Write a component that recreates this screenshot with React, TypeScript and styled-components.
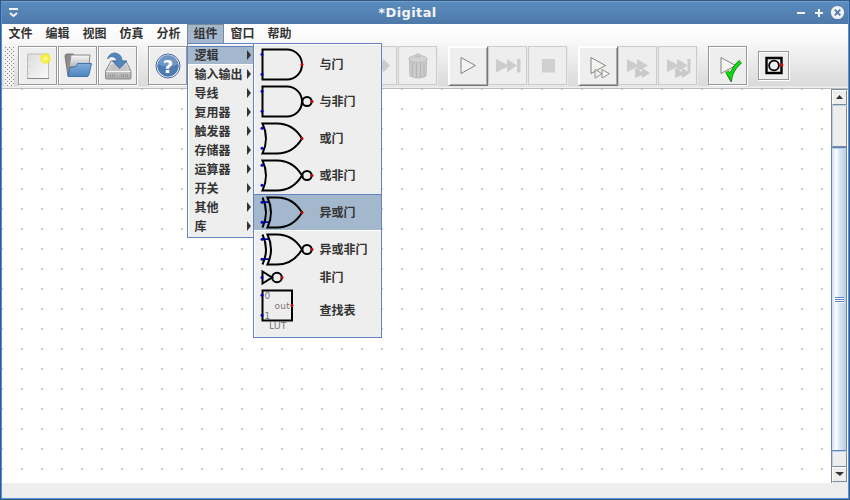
import React from "react";
import styled, { createGlobalStyle, css } from "styled-components";

const Global = createGlobalStyle`
  * { box-sizing: border-box; }
  body { margin: 0; overflow: hidden; }
`;

const Frame = styled.div`
  width: 850px;
  height: 500px;
  padding: 1px;
  background: #35597f;
`;
const Body = styled.div`
  height: 498px;
  border: 1px solid #5294e2;
  border-top-color: #6d9fd2;
  display: flex;
  flex-direction: column;
  background: #eee;
  font: bold 12px "DejaVu Sans", "Noto Sans CJK SC", sans-serif;
  color: #333;
`;
const TitleBar = styled.header`
  height: 22px;
  flex: none;
  display: grid;
  grid-template-columns: 60px 1fr 60px;
  align-items: center;
  background: linear-gradient(#5b8cbe, #4c79a9);
`;
const Title = styled.div`
  text-align: center;
  color: #f4f4f4;
  font-size: 13px;
  letter-spacing: 0.4px;
  line-height: 20px;
  padding-right: 35px;
`;
const TitleIcon = styled.svg`
  display: block;
  width: 60px;
  height: 22px;
`;
const MenuBar = styled.nav`
  height: 19px;
  flex: none;
  display: flex;
  background: linear-gradient(#fff, #f8f8f8);
`;
const MenuEntry = styled.div<{ $open?: boolean }>`
  position: relative;
  width: 37px;
  height: 19px;
  padding: 1px 0 0 6.5px;
  line-height: 19px;
  white-space: nowrap;
  ${(p) =>
    p.$open &&
    css`
      background: #a3b8cc;
      border: solid #7a8a99;
      border-width: 1px 1px 0;
      padding: 1px 0 0 5.5px;
      line-height: 17px;
    `}
`;
const Popups = styled.div`
  position: absolute;
  z-index: 2;
  left: -1px;
  top: 18px;
  display: flex;
  align-items: flex-start;
`;
const Popup = styled.div<{ $w: number; $h: number; $joined?: boolean }>`
  width: ${(p) => p.$w}px;
  height: ${(p) => p.$h}px;
  border: 1px solid #6382bf;
  border-right-width: ${(p) => (p.$joined ? 0 : 1)}px;
  background: #eee;
  box-shadow: inset 1px 1px #fff;
  padding-top: 2px;
`;
const MenuRow = styled.div<{ $active?: boolean }>`
  height: 19px;
  display: flex;
  justify-content: space-between;
  align-items: flex-start;
  padding: 1px 2px 0 6.5px;
  line-height: 17px;
  ${(p) => p.$active && css`background: #a3b8cc; box-shadow: inset 0 1px #6382bf, inset 0 -1px #fff;`}
  &::after {
    content: "";
    margin-top: 3px;
    border: solid transparent;
    border-width: 5px 0 5px 4px;
    border-left-color: #333;
  }
`;
const RowLabel = styled.span`
  padding-top: 1px;
`;
const GateRow = styled.div<{ $h: number; $active?: boolean }>`
  height: ${(p) => p.$h}px;
  display: flex;
  align-items: center;
  padding-left: 6px;
  line-height: 16px;
  ${(p) => p.$active && css`background: #a3b8cc; box-shadow: inset 0 1px #6382bf, inset 0 -1px #fff;`}
`;
const GateSvg = styled.svg`
  width: 59.5px;
  flex: none;
  display: block;
  overflow: visible;
`;
const ToolBar = styled.div`
  height: 46px;
  flex: none;
  display: flex;
  align-items: flex-start;
  padding: 3px 0 0 2px;
  background: linear-gradient(#f7f7f7, #dadada 43px, #ddd 43px, #eee 44px, #eee 45px, #bbb 45px, #bbb 46px);
`;
const Grip = styled.div`
  width: 10px;
  height: 40px;
  margin-right: 4px;
  background:
    conic-gradient(from 0deg at 1px 1px, transparent 75%, #888 0) 1px 1px / 4px 4px,
    conic-gradient(from 0deg at 1px 1px, transparent 75%, #888 0) 3px 3px / 4px 4px,
    #f2f2f2;
`;
type Kind = "normal" | "raised" | "disabled";
const ToolButton = styled.div<{ $kind?: Kind; $gap?: number; $small?: boolean }>`
  width: ${(p) => (p.$small ? 31 : 39)}px;
  height: ${(p) => (p.$small ? 29 : 39)}px;
  margin-right: ${(p) => p.$gap ?? 1}px;
  margin-top: ${(p) => (p.$small ? 5 : 0)}px;
  flex: none;
  display: grid;
  place-items: center;
  background: #eee;
  border: 1px solid #999;
  box-shadow: inset 1px 1px #fff, 1px 1px #fff;
  ${(p) => p.$kind === "disabled" && css`border-color: #ccc; box-shadow: 1px 1px #e8e8e8;`}
  ${(p) =>
    p.$kind === "raised" &&
    css`
      width: 40px;
      height: 40px;
      margin-right: ${(p.$gap ?? 1) - 1}px;
      border: 1px solid;
      border-color: #fff #777 #777 #fff;
      box-shadow: inset 1px 1px #fff, inset -1px -1px #aaa;
    `}
`;
const Icon = styled.svg`
  display: block;
  width: 32px;
  height: 32px;
`;
const Work = styled.main`
  flex: 1;
  display: flex;
`;
const Canvas = styled.div`
  flex: 1;
  background:
    linear-gradient(90deg, transparent 2px, #fff 2px) -1px -1px / 20px 20px,
    linear-gradient(transparent 2px, #fff 2px) -1px -1px / 20px 20px,
    #ccc;
`;
const Scroll = styled.aside`
  width: 17px;
  height: 394px;
  border-left: 1px solid #7a8a99;
  border-right: 1px solid #fff;
  border-top: 1px solid #7a8a99;
  display: flex;
  flex-direction: column;
  background: #eee;
`;
const ScrollBtn = styled.div`
  height: 15px;
  flex: none;
  display: grid;
  place-items: center;
  padding-bottom: 1px;
  border: 1px solid #fff;
  border-right-color: #7a8a99;
  border-bottom-color: #7a8a99;
`;
const Track = styled.div<{ $h: number }>`
  height: ${(p) => p.$h}px;
  border: solid #b8cfe5;
  border-width: 1px 0 0 1px;
  box-shadow: inset -1px 0 #7a8a99;
  border-bottom: 1px solid #7a8a99;
`;
const Thumb = styled.div`
  height: 304px;
  margin-left: -1px;
  border: 1px solid #6382bf;
  background: linear-gradient(90deg, #cddeed, #fff 30%, #dde8f3 50%, #b8cfe5);
  box-shadow: inset 0 1px #b8cfe5;
  display: flex;
  align-items: center;
  justify-content: center;
`;
const Ridges = styled.div`
  width: 9px;
  height: 6px;
  margin-top: 2px;
  background: repeating-linear-gradient(#6382bf 0 1px, #fff 1px 2px);
`;
const Status = styled.footer`
  height: 15px;
  flex: none;
  background: #eee;
`;

type GateKind = "and" | "or" | "xor" | "not" | "lut";
function Gate({ kind, inverted }: { kind: GateKind; inverted?: boolean }) {
  if (kind === "not")
    return (
      <GateSvg height={19} viewBox="0 0 59.5 19">
        <g fill="none" stroke="#000" strokeWidth="2">
          <path d="M2.5 3.5V15.5L12 9.5Z" />
          <circle cx="17" cy="9.5" r="4.8" />
        </g>
        <circle cx="2" cy="9.5" r="1.5" fill="#00c" />
        <circle cx="22" cy="9.5" r="1.5" fill="#c00" />
      </GateSvg>
    );
  if (kind === "lut")
    return (
      <GateSvg height={48} viewBox="0 0 59.5 48">
        <path d="M2.5 3.5H32V33.5H2.5Z" fill="none" stroke="#000" strokeWidth="2" />
        <g fill="#777" fontFamily="DejaVu Sans" fontWeight="400" fontSize="9">
          <text x="4.5" y="11.5">0</text>
          <text x="4.5" y="31.5">1</text>
          <text x="14.5" y="21.5" letterSpacing="0.3">out</text>
          <text x="9" y="42" fontSize="9.5">LUT</text>
        </g>
        <circle cx="2" cy="8.3" r="1.5" fill="#00c" />
        <circle cx="2" cy="28.3" r="1.5" fill="#00c" />
        <circle cx="32" cy="18.5" r="1.5" fill="#c00" />
      </GateSvg>
    );
  const out = inverted ? 52 : 42;
  return (
    <GateSvg height={37} viewBox="0 0 59.5 37">
      {kind === "xor" && <path d="M2 8.2H9M2 28.2H9" stroke="#0000c0" strokeWidth="1.7" />}
      <g fill="none" stroke="#000" strokeWidth="2">
        {kind === "and" && <path d="M2.5 3.5H27A15 15 0 0 1 27 33.5H2.5Z" />}
        {kind === "or" && <path d="M2.5 3.5H17Q33 3.5 42 18.5Q33 33.5 17 33.5H2.5Q9.5 18.5 2.5 3.5Z" />}
        {kind === "xor" && (
          <>
            <path d="M7.5 3.5H17Q33 3.5 42 18.5Q33 33.5 17 33.5H7.5Q14.5 18.5 7.5 3.5Z" />
            <path d="M2.5 3.5Q9.5 18.5 2.5 33.5" />
          </>
        )}
        {inverted && <circle cx="47" cy="18.5" r="4.6" />}
      </g>
      <circle cx="2" cy="8.3" r="1.5" fill="#00c" />
      <circle cx="2" cy="28.3" r="1.5" fill="#00c" />
      <circle cx={out} cy="18.5" r="1.5" fill="#c00" />
    </GateSvg>
  );
}

const gates: { name: string; kind: GateKind; h: number; inverted?: boolean; active?: boolean }[] = [
  { name: "与门", kind: "and", h: 37 },
  { name: "与非门", kind: "and", h: 37, inverted: true },
  { name: "或门", kind: "or", h: 37 },
  { name: "或非门", kind: "or", h: 37, inverted: true },
  { name: "异或门", kind: "xor", h: 37, active: true },
  { name: "异或非门", kind: "xor", h: 37, inverted: true },
  { name: "非门", kind: "not", h: 19 },
  { name: "查找表", kind: "lut", h: 48 },
];
const menus = ["文件", "编辑", "视图", "仿真", "分析", "组件", "窗口", "帮助"];
const groups = ["逻辑", "输入输出", "导线", "复用器", "触发器", "存储器", "运算器", "开关", "其他", "库"];

const Pic = ({ children }: { children: React.ReactNode }) => <Icon viewBox="0 0 32 32">{children}</Icon>;

export default function App() {
  return (
    <Frame>
      <Global />
      <Body>
        <TitleBar>
          <TitleIcon viewBox="0 0 60 22">
            <path d="M7 7H16" stroke="#f2f2f2" strokeWidth="2" />
            <path d="M8 11L11.5 14L15 11" fill="none" stroke="#f2f2f2" strokeWidth="2" />
          </TitleIcon>
          <Title>*Digital</Title>
          <TitleIcon viewBox="0 0 60 22">
            <path d="M9 11H17M27 11H35M31 7V15" stroke="#f2f2f2" strokeWidth="2" />
            <circle cx="49.5" cy="10.5" r="6.6" fill="#f2f2f2" />
            <path d="M46.7 7.7L52.3 13.3M52.3 7.7L46.7 13.3" stroke="#4c7db0" strokeWidth="1.8" />
          </TitleIcon>
        </TitleBar>
        <MenuBar>
          {menus.map((m) => (
            <MenuEntry key={m} $open={m === "组件"}>
              {m}
              {m === "组件" && (
                <Popups>
                  <Popup $w={66} $h={195} $joined>
                    {groups.map((g, i) => (
                      <MenuRow key={g} $active={i === 0}>
                        <RowLabel>{g}</RowLabel>
                      </MenuRow>
                    ))}
                  </Popup>
                  <Popup $w={129} $h={295}>
                    {gates.map((g) => (
                      <GateRow key={g.name} $h={g.h} $active={g.active}>
                        <Gate kind={g.kind} inverted={g.inverted} />
                        {g.name}
                      </GateRow>
                    ))}
                  </Popup>
                </Popups>
              )}
            </MenuEntry>
          ))}
        </MenuBar>
        <ToolBar>
          <Grip />
          <ToolButton>
            <Pic>
              <defs>
                <linearGradient id="paper" x1="0" y1="0" x2="1" y2="1">
                  <stop stopColor="#ddd" /><stop offset="1" stopColor="#fafafa" />
                </linearGradient>
                <radialGradient id="sun">
                  <stop stopColor="#fffde0" /><stop offset=".35" stopColor="#fff34a" />
                  <stop offset=".75" stopColor="#f7ea20" stopOpacity=".7" /><stop offset="1" stopColor="#f7ea20" stopOpacity="0" />
                </radialGradient>
              </defs>
              <rect x="5.5" y="4" width="21" height="24.5" rx="1" fill="url(#paper)" stroke="#bbb" />
              <path d="M5 28.5H27" stroke="#888" />
              <path d="M7.5 9V24" stroke="#bbb" strokeDasharray="1 6" />
              <circle cx="23.5" cy="8.5" r="6.2" fill="url(#sun)" />
            </Pic>
          </ToolButton>
          <ToolButton>
            <Pic>
              <defs>
                <linearGradient id="folder" x2="0" y2="1">
                  <stop stopColor="#84add9" /><stop offset="1" stopColor="#4e85bf" />
                </linearGradient>
                <linearGradient id="sheet" x2="0" y2="1">
                  <stop stopColor="#fafafa" /><stop offset="1" stopColor="#b5b5b5" />
                </linearGradient>
              </defs>
              <path d="M3 6Q3 4 5 4H11L13 6H26V26H6Z" fill="#8c8c8c" stroke="#777" />
              <path d="M9 5H28L27 17H7Z" fill="url(#sheet)" stroke="#888" />
              <path d="M8 17.5L14 16.5L15.5 13.5H29.5L27 24.5Q26.5 26.5 24 26.5H6Z" fill="url(#folder)" stroke="#3e73ae" />
            </Pic>
          </ToolButton>
          <ToolButton $gap={11}>
            <Pic>
              <defs>
                <linearGradient id="drive" x2="0" y2="1">
                  <stop stopColor="#e8e8e8" /><stop offset="1" stopColor="#aaa" />
                </linearGradient>
              </defs>
              <path d="M9 11H24L29 21V28Q29 29 28 29H4.5Q3.5 29 3.5 28V21Z" fill="url(#drive)" stroke="#8a8a8a" />
              <ellipse cx="16.5" cy="17" rx="8.5" ry="4" fill="#c4c4c4" />
              <path d="M4 21.5H28.5" stroke="#f5f5f5" />
              <path d="M6 25.5H14M19 25.5H26" stroke="#999" strokeWidth="3" strokeDasharray="1 1" />
              <path d="M5.5 9Q7 3 13 3Q20 4 20 11H25L17.5 18.5L10.5 11H15Q14 6.5 9 6.5Q7 7 5.5 9Z" fill="#5586b9" stroke="#3c6ca3" strokeWidth="0.8" />
            </Pic>
          </ToolButton>
          <ToolButton>
            <Pic>
              <circle cx="16" cy="16" r="12" fill="#fff" stroke="#3f6798" strokeWidth="1" />
              <circle cx="16" cy="16" r="10.3" fill="#4f7cb2" stroke="#315b8e" strokeWidth="0.7" />
              <path d="M6 14A10 10 0 0 1 26 14Q15 19 6 14Z" fill="#86a9d0" opacity=".6" />
              <text x="16" y="22.5" textAnchor="middle" fill="#fff" fontFamily="DejaVu Sans" fontWeight="700" fontSize="18">?</text>
            </Pic>
          </ToolButton>
          {[1, 1, 1, 11].map((gap, i) => (
            <ToolButton key={i} $kind="disabled" $gap={gap}>
              <Pic><circle cx="14" cy="15" r="7" fill="none" stroke="#ccc" strokeWidth="3" /></Pic>
            </ToolButton>
          ))}
          <ToolButton $kind="disabled">
            <Pic>
              <path d="M3 11H21V8.5L28 15.5L21 23V20H3Z" fill="#ccc" />
            </Pic>
          </ToolButton>
          <ToolButton $kind="disabled" $gap={11}>
            <Pic>
              <path d="M7.5 10H24.5L24 26Q16 30 8 26Z" fill="#cbcbcb" stroke="#bbb" />
              <path d="M10.5 13V26M14.5 13V27M18.5 13V27M22 13V26" stroke="#b5b5b5" />
              <ellipse cx="16" cy="9" rx="9.2" ry="3.6" fill="#d2d2d2" stroke="#bbb" />
              <ellipse cx="16" cy="5.5" rx="2.8" ry="1.5" fill="#ccc" stroke="#bbb" />
            </Pic>
          </ToolButton>
          <ToolButton $kind="raised"><Play /></ToolButton>
          <ToolButton $kind="disabled"><Pic><path d="M4 9L15 14.5V9L25 15.5L15 22.5V17L4 22.5Z" fill="#ccc" /><path d="M25 9H28.5V22.5H25Z" fill="#ccc" /></Pic></ToolButton>
          <ToolButton $kind="disabled" $gap={11}><Pic><path d="M10 9H23V22.5H10Z" fill="#d0d0d0" /></Pic></ToolButton>
          <ToolButton $kind="raised"><Play twin /></ToolButton>
          <ToolButton $kind="disabled"><Pic><FastForward /></Pic></ToolButton>
          <ToolButton $kind="disabled" $gap={11}><Pic><path d="M25.5 9H28.5V23H25.5Z" fill="#ccc" /><FastForward /></Pic></ToolButton>
          <ToolButton $gap={11}><Play check /></ToolButton>
          <ToolButton $small>
            <svg width="20" height="19" viewBox="0 0 20 19">
              <path d="M2.5 2H17.5V17H2.5Z" fill="none" stroke="#000" strokeWidth="2.4" />
              <circle cx="10" cy="9.5" r="4.9" fill="none" stroke="#000" strokeWidth="1.8" />
              <circle cx="17.7" cy="9" r="1.7" fill="#d00" />
            </svg>
          </ToolButton>
        </ToolBar>
        <Work>
          <Canvas />
          <Scroll>
            <ScrollBtn><svg width="7" height="4"><path d="M0 4L3.5 0L7 4Z" fill="#333" /></svg></ScrollBtn>
            <Track $h={42} />
            <Thumb><Ridges /></Thumb>
            <Track $h={16} />
            <ScrollBtn><svg width="9" height="4"><path d="M0 0H9L5 4Z" fill="#333" /></svg></ScrollBtn>
          </Scroll>
        </Work>
        <Status />
      </Body>
    </Frame>
  );
}

function Play({ twin, check }: { twin?: boolean; check?: boolean }) {
  return (
    <Pic>
      <path d="M9 7.5V23.5L23.5 15.5Z" fill="#f3f3ef" stroke="#777" strokeWidth="0.9" />
      {twin && <path d="M13 19.5V28L20 23.7ZM20 19.5V28L27.5 23.7Z" fill="#f3f3ef" stroke="#888" strokeWidth="0.9" />}
      {check && <path d="M15 21.5L18.5 27.5Q20 19 28.5 11.5" fill="none" stroke="#176617" strokeWidth="4" />}
      {check && <path d="M15 21.5L18.5 27Q20 19 28.5 11.5" fill="none" stroke="#0be00b" strokeWidth="2.8" />}
    </Pic>
  );
}
function FastForward() {
  return (
    <>
      <path d="M5 9L15 14.5V9L26 15.5L15 22V17L5 22Z" fill="#ccc" />
      <path d="M13 18L20 22V18L28 23L20 28V25L13 28Z" fill="#c8c8c8" stroke="#ddd" strokeWidth=".5" />
    </>
  );
}
